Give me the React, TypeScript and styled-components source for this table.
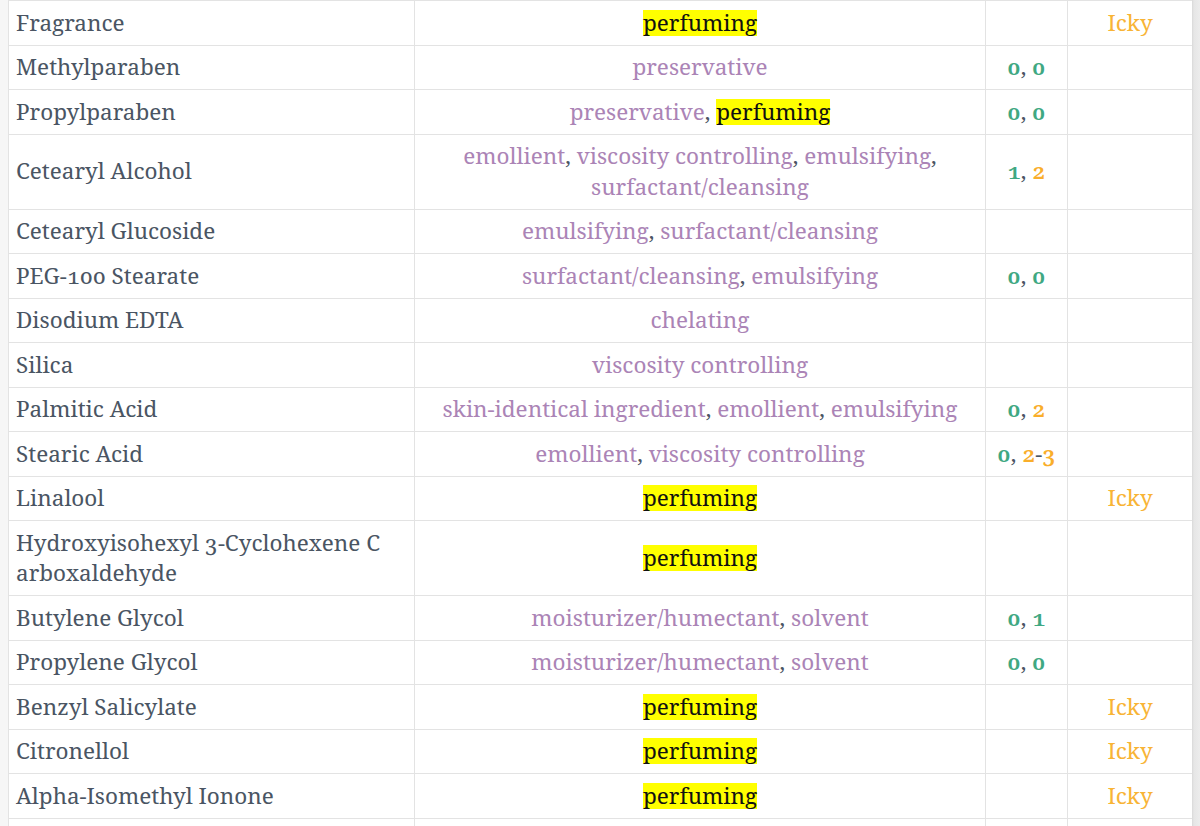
import React from "react";
import styled, { createGlobalStyle } from "styled-components";

const Global = createGlobalStyle`
  html, body { margin: 0; padding: 0; background: #f6f6f6; }
  body { font-family: "Noto Serif", "DejaVu Serif", serif; }
`;

const Page = styled.div`
  display: flex;
  height: 826px;
  overflow: hidden;
  padding-left: 8px;
`;

const Sheet = styled.div`
  width: 1184px;
  background: #fff;
`;

const Track = styled.div`
  flex: 1;
  background: linear-gradient(to right, #d9d9d9 0px, #e6e6e6 2px, #ececec 100%);
`;

const Table = styled.table`
  width: 1184px;
  border-collapse: collapse;
  table-layout: fixed;
  font-family: "Noto Serif", "DejaVu Serif", serif;
  font-size: 22.5px;
  line-height: 30.5px;
  font-variant-numeric: oldstyle-nums;
`;

const Col = styled.col<{ $w: number }>`
  width: ${(p) => p.$w}px;
`;

const Cell = styled.td`
  border: 1px solid #e3e3e3;
  padding: 6.5px 7px;
  vertical-align: middle;
  color: #4a5563;
`;

const NameCell = styled(Cell)`
  text-align: left;
`;

const CenterCell = styled(Cell)`
  text-align: center;
`;

const FillerCell = styled(Cell)`
  height: 30.5px;
`;

const Func = styled.span`
  color: #ab84b6;
`;

const Highlight = styled.span`
  color: #111;
  background: linear-gradient(#ffff00, #ffff00) no-repeat;
  background-size: 100% 26px;
  background-position: 0 3px;
`;

const Num = styled.span<{ $tone: "good" | "warn" }>`
  color: ${(p) => (p.$tone === "good" ? "#3fa882" : "#f9ae2b")};
  font-weight: 600;
`;

const Icky = styled.span`
  color: #f8b436;
`;

type Score = { v: string; tone: "good" | "warn" }[];

type Row = {
  name: string;
  funcs: string[];
  irr?: Score;
  com?: Score;
  icky?: boolean;
};

const g = (v: string) => ({ v, tone: "good" as const });
const w = (v: string) => ({ v, tone: "warn" as const });

const rows: Row[] = [
  { name: "Fragrance", funcs: ["perfuming"], icky: true },
  { name: "Methylparaben", funcs: ["preservative"], irr: [g("0")], com: [g("0")] },
  { name: "Propylparaben", funcs: ["preservative", "perfuming"], irr: [g("0")], com: [g("0")] },
  {
    name: "Cetearyl Alcohol",
    funcs: ["emollient", "viscosity controlling", "emulsifying", "surfactant/cleansing"],
    irr: [g("1")],
    com: [w("2")],
  },
  { name: "Cetearyl Glucoside", funcs: ["emulsifying", "surfactant/cleansing"] },
  { name: "PEG-100 Stearate", funcs: ["surfactant/cleansing", "emulsifying"], irr: [g("0")], com: [g("0")] },
  { name: "Disodium EDTA", funcs: ["chelating"] },
  { name: "Silica", funcs: ["viscosity controlling"] },
  {
    name: "Palmitic Acid",
    funcs: ["skin-identical ingredient", "emollient", "emulsifying"],
    irr: [g("0")],
    com: [w("2")],
  },
  { name: "Stearic Acid", funcs: ["emollient", "viscosity controlling"], irr: [g("0")], com: [w("2"), w("3")] },
  { name: "Linalool", funcs: ["perfuming"], icky: true },
  { name: "Hydroxyisohexyl 3-Cyclohexene C|arboxaldehyde", funcs: ["perfuming"] },
  { name: "Butylene Glycol", funcs: ["moisturizer/humectant", "solvent"], irr: [g("0")], com: [g("1")] },
  { name: "Propylene Glycol", funcs: ["moisturizer/humectant", "solvent"], irr: [g("0")], com: [g("0")] },
  { name: "Benzyl Salicylate", funcs: ["perfuming"], icky: true },
  { name: "Citronellol", funcs: ["perfuming"], icky: true },
  { name: "Alpha-Isomethyl Ionone", funcs: ["perfuming"], icky: true },
];

function Name({ text }: { text: string }) {
  const parts = text.split("|");
  return (
    <>
      {parts.map((p, i) => (
        <React.Fragment key={i}>
          {i > 0 ? <wbr /> : null}
          {p}
        </React.Fragment>
      ))}
    </>
  );
}

function Functions({ funcs }: { funcs: string[] }) {
  return (
    <>
      {funcs.map((f, i) => (
        <React.Fragment key={f}>
          {f === "perfuming" ? <Highlight>{f}</Highlight> : <Func>{f}</Func>}
          {i < funcs.length - 1 ? ", " : ""}
        </React.Fragment>
      ))}
    </>
  );
}

function ScoreText({ s }: { s: Score }) {
  return (
    <>
      {s.map((p, i) => (
        <React.Fragment key={i}>
          {i > 0 ? "-" : ""}
          <Num $tone={p.tone}>{p.v}</Num>
        </React.Fragment>
      ))}
    </>
  );
}

export default function App() {
  return (
    <>
      <Global />
      <Page>
        <Sheet>
          <Table>
            <colgroup>
              <Col $w={406} />
              <Col $w={571} />
              <Col $w={82} />
              <Col $w={125} />
            </colgroup>
            <tbody>
              {rows.map((r) => (
                <tr key={r.name}>
                  <NameCell>
                    <Name text={r.name} />
                  </NameCell>
                  <CenterCell>
                    <Functions funcs={r.funcs} />
                  </CenterCell>
                  <CenterCell>
                    {r.irr && r.com ? (
                      <>
                        <ScoreText s={r.irr} />, <ScoreText s={r.com} />
                      </>
                    ) : null}
                  </CenterCell>
                  <CenterCell>{r.icky ? <Icky>Icky</Icky> : null}</CenterCell>
                </tr>
              ))}
              <tr>
                <FillerCell />
                <FillerCell />
                <FillerCell />
                <FillerCell />
              </tr>
            </tbody>
          </Table>
        </Sheet>
        <Track />
      </Page>
    </>
  );
}
